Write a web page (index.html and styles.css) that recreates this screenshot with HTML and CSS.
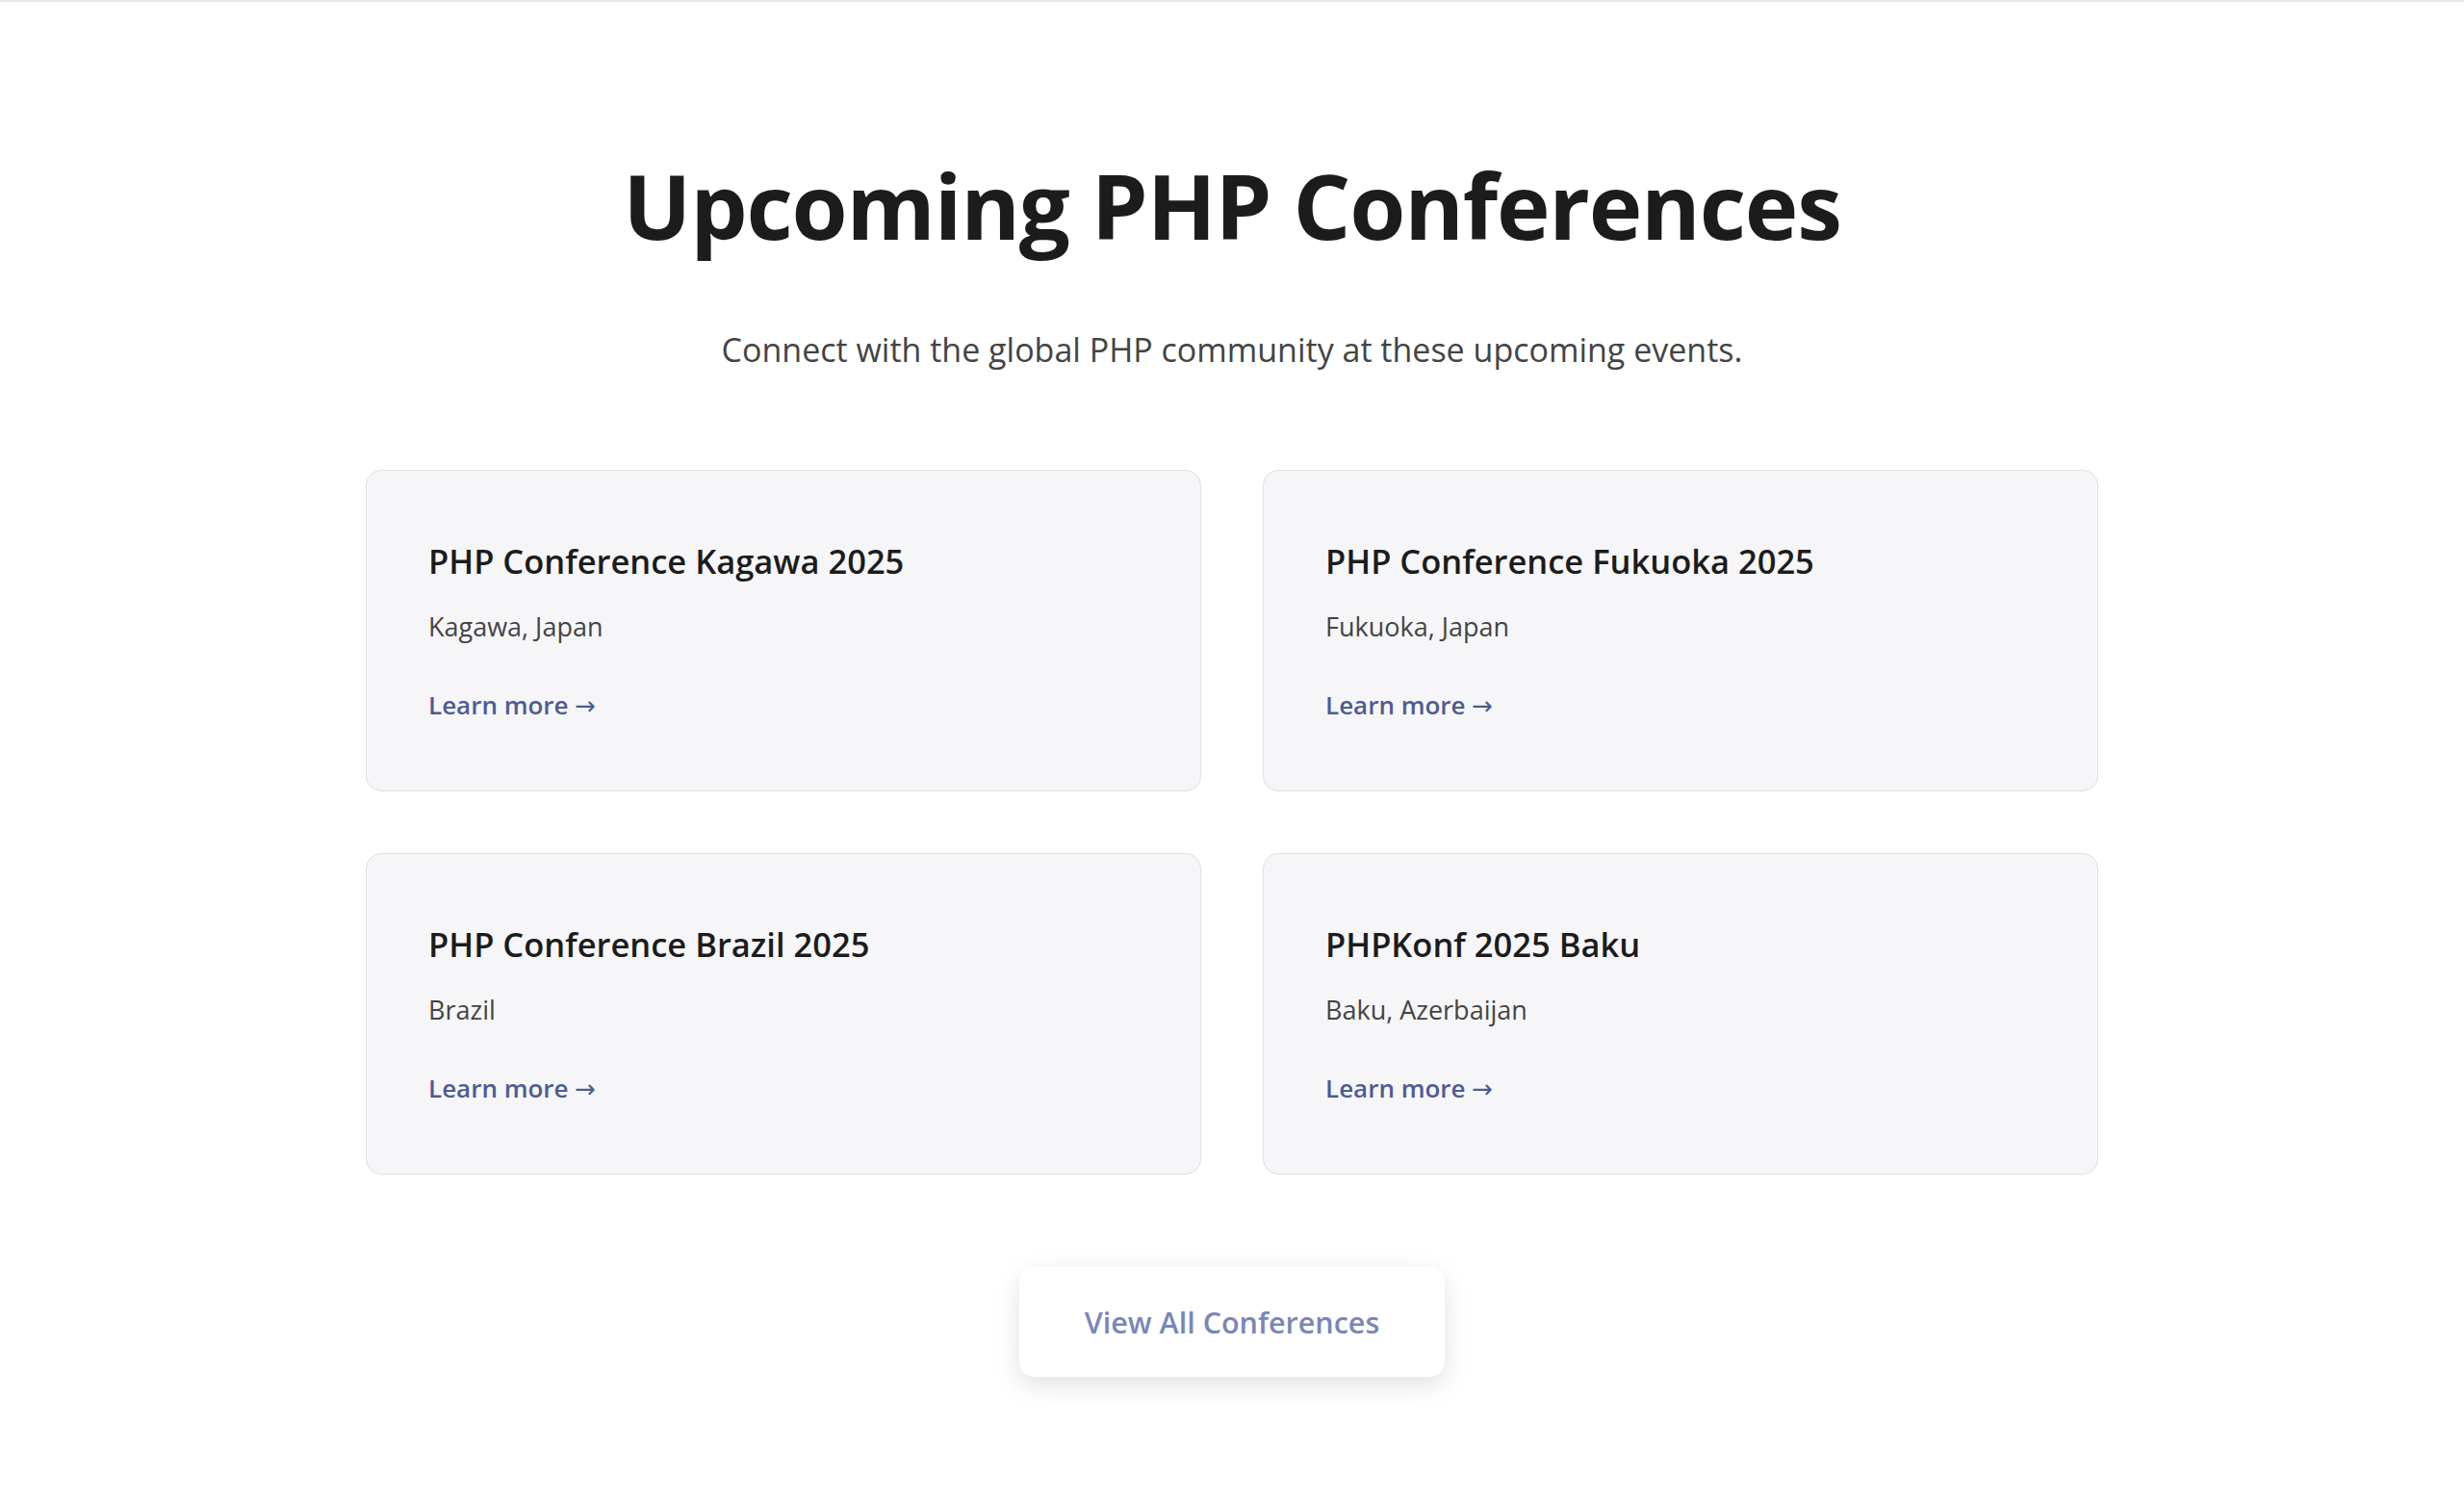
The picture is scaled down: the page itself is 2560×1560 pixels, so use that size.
FILE: index.html
```html
<!DOCTYPE html>
<html lang="en">
<head>
<meta charset="utf-8">
<title>Upcoming PHP Conferences</title>
<link rel="stylesheet" href="styles.css">
</head>
<body>
<div class="topline"></div>
<section class="conferences">
  <h1 class="title">Upcoming PHP Conferences</h1>
  <p class="subtitle">Connect with the global PHP community at these upcoming events.</p>
  <div class="grid">
    <article class="card">
      <h3 class="card-title">PHP Conference Kagawa 2025</h3>
      <p class="card-location">Kagawa, Japan</p>
      <a class="card-link" href="#">Learn more <span class="arrow">→</span></a>
    </article>
    <article class="card">
      <h3 class="card-title">PHP Conference Fukuoka 2025</h3>
      <p class="card-location">Fukuoka, Japan</p>
      <a class="card-link" href="#">Learn more <span class="arrow">→</span></a>
    </article>
    <article class="card">
      <h3 class="card-title">PHP Conference Brazil 2025</h3>
      <p class="card-location">Brazil</p>
      <a class="card-link" href="#">Learn more <span class="arrow">→</span></a>
    </article>
    <article class="card">
      <h3 class="card-title">PHPKonf 2025 Baku</h3>
      <p class="card-location">Baku, Azerbaijan</p>
      <a class="card-link" href="#">Learn more <span class="arrow">→</span></a>
    </article>
  </div>
  <div class="actions">
    <a class="btn" href="#">View All Conferences</a>
  </div>
</section>
</body>
</html>
```

FILE: styles.css
```css
* { box-sizing: border-box; }

html, body {
  margin: 0;
  padding: 0;
  background: #ffffff;
}

body {
  font-family: "Open Sans", "Noto Sans", "DejaVu Sans", sans-serif;
  color: #1c1c1c;
}

.topline {
  height: 2px;
  background: #e6e6ee;
}

.conferences {
  max-width: 1800px;
  margin: 0 auto;
  padding: 154px 0 130px;
  display: flex;
  flex-direction: column;
  align-items: stretch;
}

.title {
  margin: 0;
  text-align: center;
  font-size: 94px;
  line-height: 114px;
  font-weight: 700;
  color: #1c1c1c;
  letter-spacing: -1.2px;
}

.subtitle {
  margin: 69px 0 0;
  text-align: center;
  font-size: 34px;
  line-height: 48px;
  color: #444444;
}

.grid {
  margin-top: 101px;
  display: grid;
  grid-template-columns: 1fr 1fr;
  gap: 64px;
}

.card {
  background: #f6f6f8;
  border: 1px solid #e0e0e3;
  border-radius: 16px;
  padding: 64px 64px 65px;
  display: flex;
  flex-direction: column;
  align-items: flex-start;
}

.card-title {
  margin: 0 0 19px;
  font-size: 34.5px;
  line-height: 60px;
  font-weight: 600;
  color: #1c1c1c;
}

.card-location {
  margin: 0 0 38px;
  font-size: 27px;
  line-height: 38px;
  color: #444444;
}

.card-link {
  display: block;
  font-size: 26px;
  line-height: 48px;
  font-weight: 600;
  color: #4f5b93;
  text-decoration: none;
}

.arrow {
  font-weight: 400;
}

.actions {
  margin-top: 96px;
  display: flex;
  justify-content: center;
}

.btn {
  display: inline-block;
  padding: 32px 68px;
  background: #ffffff;
  border-radius: 16px;
  box-shadow: 0 8px 28px rgba(0, 0, 0, 0.12);
  font-size: 30.5px;
  line-height: 50px;
  font-weight: 600;
  color: #7a86b8;
  text-decoration: none;
}
```
